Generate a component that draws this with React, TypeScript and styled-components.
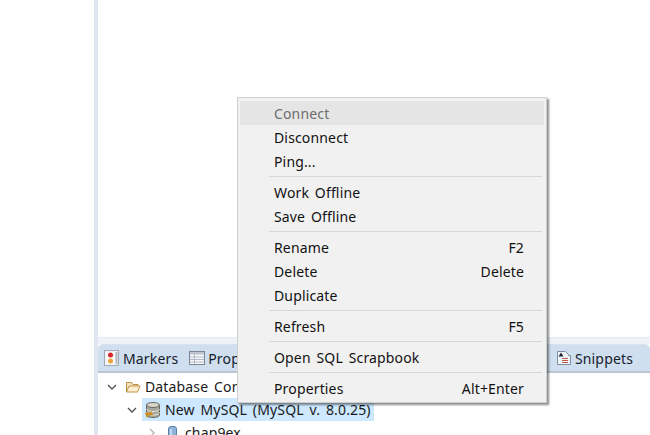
import React from "react";
import styled, { createGlobalStyle } from "styled-components";

const GlobalStyle = createGlobalStyle`
  html, body {
    margin: 0;
    padding: 0;
    background: #fff;
    overflow: hidden;
  }
  #root {
    width: 650px;
    height: 435px;
  }
`;

const Page = styled.div`
  position: relative;
  display: flex;
  width: 650px;
  height: 435px;
  overflow: hidden;
  background: #fff;
  font-family: "Noto Sans", "Open Sans", sans-serif;
  font-size: 14px;
  font-variant-ligatures: none;
  word-spacing: 2px;
  letter-spacing: 0.15px;
  color: #1a1a1a;
`;

const LeftGutter = styled.div`
  width: 94px;
  flex: none;
`;

const Rail = styled.div`
  width: 4px;
  flex: none;
  background: #dfe6f2;
`;

const Workbench = styled.main`
  flex: 1;
  display: flex;
  flex-direction: column;
  min-width: 0;
`;

const Editor = styled.div`
  height: 338px;
  flex: none;
  border-bottom: 1px solid #e6ebf3;
  box-sizing: border-box;
`;

const Sash = styled.div`
  height: 6px;
  flex: none;
  background: #eef1f7;
`;

const TabBar = styled.div`
  height: 29px;
  flex: none;
  display: flex;
  align-items: center;
  box-sizing: border-box;
  padding: 0 17px 0 6px;
  gap: 11px;
  background: #d0dfef;
  border-top: 1px solid #d9e2ed;
  border-bottom: 2px solid #bcc6d2;
  border-radius: 5px 5px 0 0;
`;

const Tab = styled.div<{ $end?: boolean }>`
  display: flex;
  align-items: center;
  gap: 3px;
  white-space: nowrap;
  color: #16202c;
  margin-left: ${(p) => (p.$end ? "auto" : "0")};
`;

const Tree = styled.div`
  flex: 1;
  padding: 2px 0 0 8px;
`;

const TreeRow = styled.div<{ $depth: number }>`
  display: flex;
  align-items: center;
  height: 23px;
  gap: 4px;
  padding-left: ${(p) => p.$depth * 20}px;
  white-space: nowrap;
`;

const IconSlot = styled.span<{ $left: number }>`
  display: inline-flex;
  margin-left: ${(p) => p.$left}px;
`;

const SelectedLabel = styled.span`
  display: inline-flex;
  align-items: center;
  gap: 3px;
  height: 23px;
  padding: 0 3px 0 2px;
  background: #cde8ff;
`;

const Menu = styled.div`
  position: absolute;
  left: 237px;
  top: 97px;
  width: 310px;
  height: 306px;
  box-sizing: border-box;
  padding: 3px 2px;
  background: #f1f1f1;
  border: 1px solid #cfcfcf;
  box-shadow: 2px 2px 2px rgba(0, 0, 0, 0.45);
`;

const MenuItem = styled.div<{ $disabled?: boolean }>`
  display: flex;
  justify-content: space-between;
  align-items: center;
  height: 24px;
  padding: 0 20px 0 34px;
  color: ${(p) => (p.$disabled ? "#6d6d6d" : "#111")};
  background: ${(p) => (p.$disabled ? "#e5e5e5" : "transparent")};
`;

const Separator = styled.div`
  height: 1px;
  margin: 3px 2px 3px 29px;
  background: #d7d7d7;
`;

const Shortcut = styled.span`
  color: #111;
`;

const MarkersIcon = () => (
  <svg width="16" height="16" viewBox="0 0 16 16">
    <rect x="0.5" y="0.5" width="14" height="15" fill="#eef0f4" stroke="#a3aab8" />
    <rect x="2" y="2" width="9" height="12" fill="#fbfbfb" />
    <path d="M12.500 2v12" stroke="#b4b9c3" strokeWidth="2" />
    <circle cx="6.500" cy="5" r="2.500" fill="#d9252b" />
    <circle cx="6.500" cy="11" r="2.500" fill="#eda33c" />
  </svg>
);

const TableIcon = () => (
  <svg width="16" height="16" viewBox="0 0 16 16">
    <rect x="0.500" y="1.500" width="15" height="13" fill="#f7f8fa" stroke="#7d8796" />
    <rect x="1" y="2" width="14" height="2.500" fill="#bcc4cf" />
    <path d="M1 7h14M1 9.500h14M1 12h14M5.500 4v10" stroke="#b3bbc6" fill="none" />
  </svg>
);

const SnippetsIcon = () => (
  <svg width="16" height="16" viewBox="0 0 16 16">
    <path d="M1.500 1.500h8l3 3v1h2v9h-13z" fill="#eff4f9" stroke="#7f8fa3" />
    <path d="M5 2.500l-2.500 4h5z" fill="#1d2530" />
    <path d="M6 8.500h6M6 10.500h6M6 12.500h6" stroke="#c25a4a" />
  </svg>
);

const Chevron = ({ open }: { open?: boolean }) => (
  <svg width="12" height="12" viewBox="0 0 12 12">
    <path
      d={open ? "M2 4l4 4 4-4" : "M4 2l4 4-4 4"}
      fill="none"
      stroke={open ? "#555" : "#b5b5b5"}
      strokeWidth="1.400"
    />
  </svg>
);

const FolderIcon = () => (
  <svg width="16" height="16" viewBox="0 0 16 16">
    <path d="M1.500 13V3.500h5l1.500 2h5V7" fill="#f6e6c2" stroke="#b98f45" />
    <path d="M1.500 13l2.500-6h11L12.500 13z" fill="#fcefd0" stroke="#c0924a" />
  </svg>
);

const DatabaseIcon = () => (
  <svg width="18" height="18" viewBox="0 0 18 18">
    <path d="M2.500 4v10c0 1.400 2.800 2.500 6.500 2.500s6.500-1.100 6.500-2.500V4z" fill="#a8a89e" stroke="#66665c" />
    <ellipse cx="9" cy="4" rx="6.500" ry="2.500" fill="#d8d7cd" stroke="#66665c" />
    <path d="M2.500 8c0 1.400 2.800 2.500 6.500 2.500s6.500-1.100 6.500-2.500M2.500 11.500c0 1.400 2.800 2.500 6.500 2.500s6.500-1.100 6.500-2.500" fill="none" stroke="#ebeae2" />
    <path d="M1 12.500h6v-2M9 13.500H3v3" fill="none" stroke="#d18f14" strokeWidth="1.400" />
  </svg>
);

const SchemaIcon = () => (
  <svg width="15" height="16" viewBox="0 0 15 16">
    <rect x="2.500" y="1.500" width="8" height="14" rx="2.500" fill="#8fb4dc" stroke="#5b80a8" />
    <path d="M5 4v10" stroke="#d5e4f4" strokeWidth="1.500" />
  </svg>
);

export default function App() {
  return (
    <Page>
      <GlobalStyle />
      <LeftGutter />
      <Rail />
      <Workbench>
        <Editor />
        <Sash />
        <TabBar>
          <Tab>
            <MarkersIcon />
            Markers
          </Tab>
          <Tab>
            <TableIcon />
            Properties
          </Tab>
          <Tab $end>
            <SnippetsIcon />
            Snippets
          </Tab>
        </TabBar>
        <Tree>
          <TreeRow $depth={0}>
            <Chevron open />
            <IconSlot $left={3}>
              <FolderIcon />
            </IconSlot>
            Database Connections
          </TreeRow>
          <TreeRow $depth={1}>
            <Chevron open />
            <SelectedLabel>
              <DatabaseIcon />
              New MySQL (MySQL v. 8.0.25)
            </SelectedLabel>
          </TreeRow>
          <TreeRow $depth={2}>
            <Chevron />
            <IconSlot $left={4}>
              <SchemaIcon />
            </IconSlot>
            chap9ex
          </TreeRow>
        </Tree>
      </Workbench>
      <Menu>
        <MenuItem $disabled>Connect</MenuItem>
        <MenuItem>Disconnect</MenuItem>
        <MenuItem>Ping...</MenuItem>
        <Separator />
        <MenuItem>Work Offline</MenuItem>
        <MenuItem>Save Offline</MenuItem>
        <Separator />
        <MenuItem>
          Rename<Shortcut>F2</Shortcut>
        </MenuItem>
        <MenuItem>
          Delete<Shortcut>Delete</Shortcut>
        </MenuItem>
        <MenuItem>Duplicate</MenuItem>
        <Separator />
        <MenuItem>
          Refresh<Shortcut>F5</Shortcut>
        </MenuItem>
        <Separator />
        <MenuItem>Open SQL Scrapbook</MenuItem>
        <Separator />
        <MenuItem>
          Properties<Shortcut>Alt+Enter</Shortcut>
        </MenuItem>
      </Menu>
    </Page>
  );
}
